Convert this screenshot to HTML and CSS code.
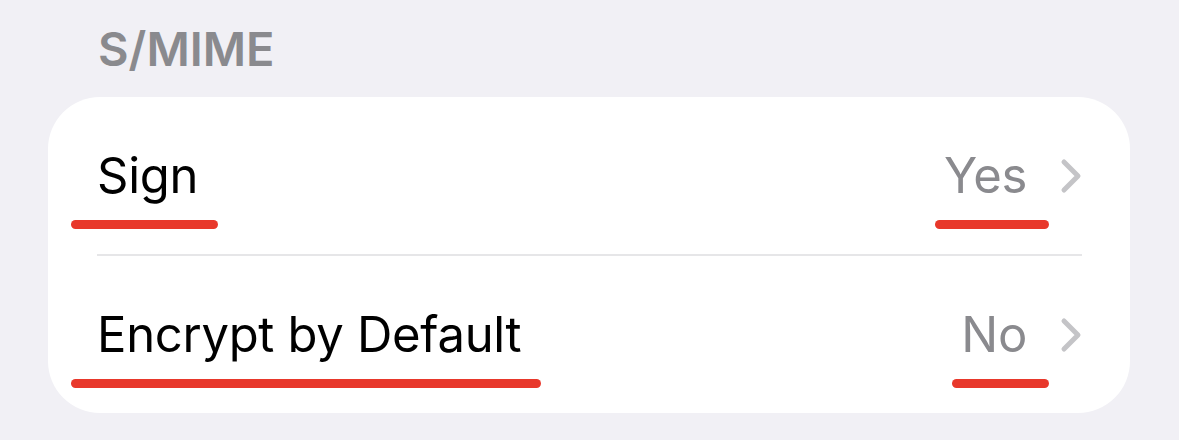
FILE: index.html
```html
<!DOCTYPE html>
<html lang="en">
<head>
<meta charset="utf-8">
<title>S/MIME</title>
<link rel="stylesheet" href="styles.css">
</head>
<body>
<main class="page">
  <h2 class="section-title">S/MIME</h2>
  <section class="card">
    <div class="row">
      <span class="label">Sign<i class="mark mark-label"></i></span>
      <span class="detail">
        <span class="value">Yes<i class="mark mark-value"></i></span>
        <svg class="chevron" viewBox="0 0 22 36" width="22" height="36" aria-hidden="true"><path d="M4 4 L18 18 L4 32" fill="none" stroke="#c4c4c7" stroke-width="5" stroke-linecap="round" stroke-linejoin="round"/></svg>
      </span>
    </div>
    <div class="divider"></div>
    <div class="row">
      <span class="label">Encrypt by Default<i class="mark mark-label"></i></span>
      <span class="detail">
        <span class="value">No<i class="mark mark-value"></i></span>
        <svg class="chevron" viewBox="0 0 22 36" width="22" height="36" aria-hidden="true"><path d="M4 4 L18 18 L4 32" fill="none" stroke="#c4c4c7" stroke-width="5" stroke-linecap="round" stroke-linejoin="round"/></svg>
      </span>
    </div>
  </section>
</main>
</body>
</html>
```
FILE: styles.css
```css
html, body {
  margin: 0;
  padding: 0;
  background: #f1f0f5;
  font-family: "Inter", "Liberation Sans", sans-serif;
}
.page {
  width: 1179px;
  height: 440px;
  padding: 0 48px;
  box-sizing: border-box;
  overflow: hidden;
}
.section-title {
  margin: 0;
  padding: 21px 0 0 50px;
  height: 75px;
  box-sizing: border-box;
  font-size: 47px;
  font-weight: 600;
  line-height: 56px;
  color: #8a8a8e;
  letter-spacing: 0;
}
.card {
  margin-top: 22px;
  width: 1082px;
  background: #ffffff;
  border-radius: 52px;
  padding: 0 49px 0 49px;
  box-sizing: border-box;
}
.row {
  height: 157px;
  display: flex;
  align-items: center;
  justify-content: space-between;
}
.label, .value {
  position: relative;
  font-size: 49px;
  line-height: 60px;
  font-weight: 400;
  letter-spacing: -0.3px;
}
.label {
  color: #000000;
}
.detail {
  display: flex;
  align-items: center;
  gap: 33px;
}
.value {
  color: #8a8a8e;
}
.chevron {
  display: block;
  margin-right: -1px;
}
.divider {
  height: 2px;
  background: #e6e6e8;
  margin-right: -1px;
}
.mark {
  position: absolute;
  height: 9px;
  border-radius: 5px;
  background: #e8382b;
  filter: blur(0.6px);
  top: 74px;
}
.mark-label {
  left: -26px;
  right: -20px;
}
.mark-value {
  left: -9px;
  right: -22px;
}
```
